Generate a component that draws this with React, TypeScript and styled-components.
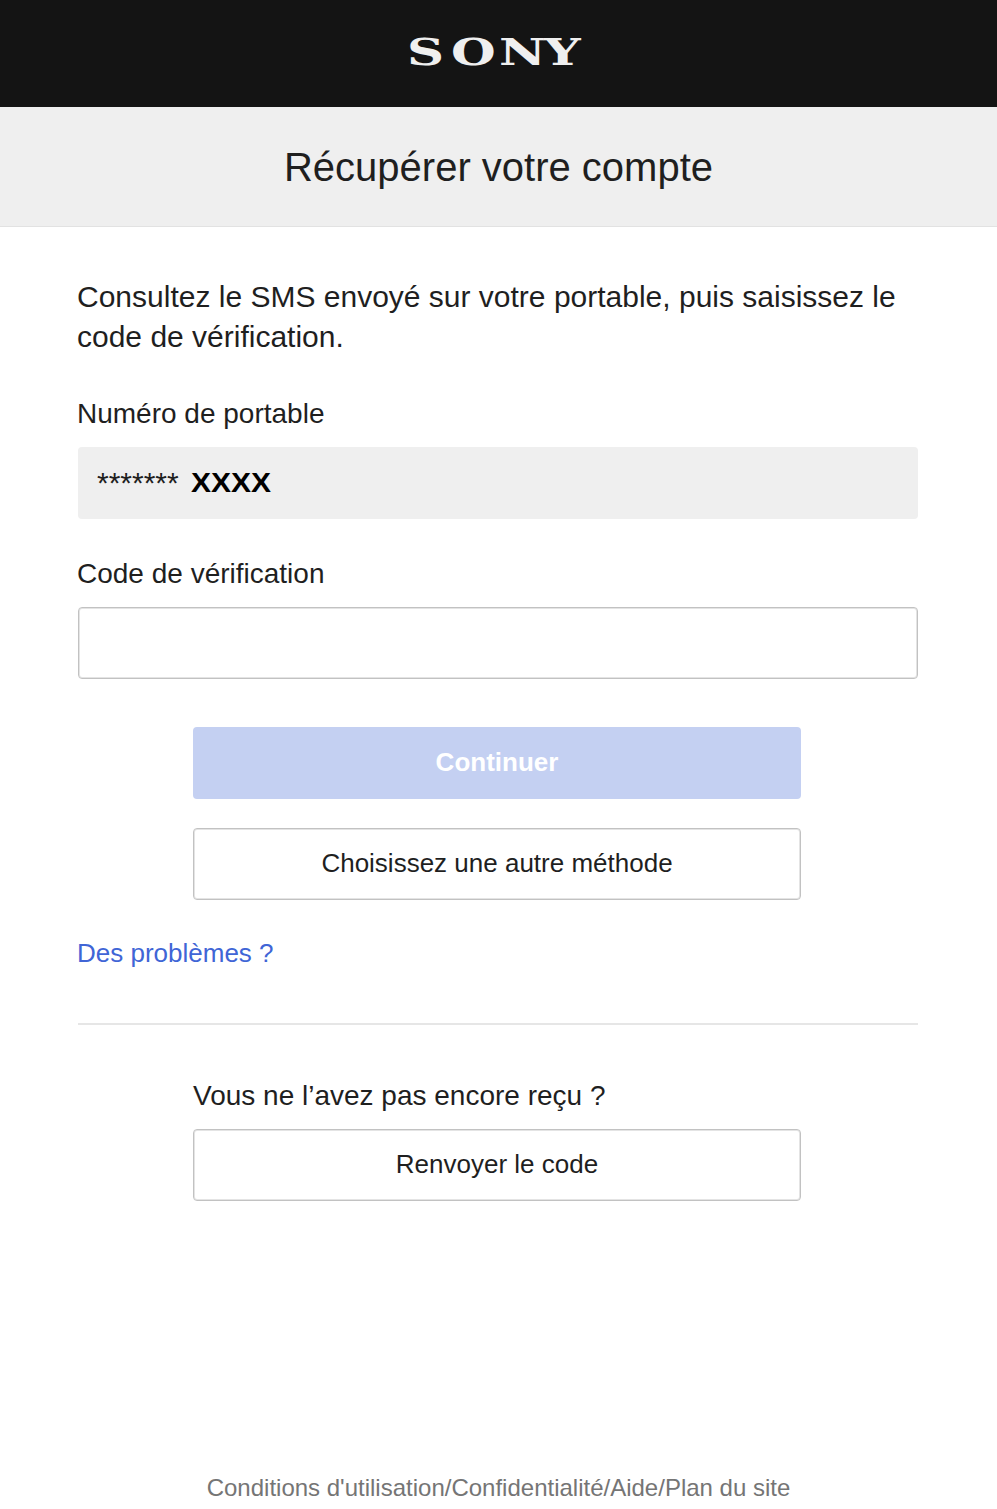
import React from "react";
import styled, { createGlobalStyle } from "styled-components";

const GlobalStyle = createGlobalStyle`
  * { box-sizing: border-box; }
  body {
    margin: 0;
    background: #fff;
    color: #1f1f1f;
    font-family: "Liberation Sans", Arial, sans-serif;
  }
`;

const Page = styled.div`
  display: flex;
  flex-direction: column;
  height: 1509px;
  overflow: hidden;
`;

const Header = styled.header`
  display: flex;
  justify-content: center;
  height: 107px;
  padding-top: 26px;
  background: #141414;
`;

const Logo = styled.svg`
  display: block;
  width: 200px;
  height: 50px;
  fill: #efefef;
  font-family: "DejaVu Serif", serif;
  font-weight: 700;
  font-size: 38px;
`;

const TitleBar = styled.div`
  height: 120px;
  background: #efefef;
  border-bottom: 1px solid #e2e2e2;
  text-align: center;
`;

const Title = styled.h1`
  margin: 0;
  padding: 37px 0 0;
  font-size: 40px;
  line-height: 46px;
  font-weight: 400;
`;

const Main = styled.main`
  display: flex;
  flex-direction: column;
  width: 840px;
  margin: 50px 0 0 78px;
`;

const Intro = styled.p`
  margin: 0 0 41px -1px;
  font-size: 30px;
  line-height: 40px;
`;

const Label = styled.label`
  margin: 0 0 17px -1px;
  font-size: 28px;
  line-height: 32px;
`;

const MaskedPhone = styled.div`
  display: flex;
  align-items: center;
  gap: 12px;
  height: 72px;
  margin-bottom: 39px;
  padding: 0 19px;
  border-radius: 4px;
  background: #efefef;
  font-size: 30px;
  line-height: 36px;
`;

const LastDigits = styled.b`
  color: #000;
  font-size: 28px;
  transform: scaleX(1.07);
  transform-origin: left;
`;

const CodeInput = styled.input`
  width: 100%;
  height: 72px;
  padding: 0 19px;
  border: 1px solid #c2c2c2;
  border-radius: 4px;
  box-shadow: inset 0 0 0 1px #e4e4e4;
  outline: none;
  font: inherit;
  font-size: 30px;
`;

const Actions = styled.div`
  display: flex;
  flex-direction: column;
  width: 608px;
  margin-left: 115px;
`;

const Button = styled.button<{ $primary?: boolean }>`
  height: 72px;
  padding: 0 0 1px;
  border: ${(p) => (p.$primary ? "0" : "1px solid #c2c2c2")};
  border-radius: 4px;
  box-shadow: ${(p) => (p.$primary ? "none" : "inset 0 0 0 1px #e4e4e4")};
  background: ${(p) => (p.$primary ? "#c4d0f2" : "#fff")};
  color: ${(p) => (p.$primary ? "#fff" : "#1f1f1f")};
  font: inherit;
  font-size: 26px;
  font-weight: ${(p) => (p.$primary ? 700 : 400)};
`;

const FormActions = styled(Actions)`
  gap: 29px;
  margin-top: 48px;
`;

const HelpLink = styled.a`
  align-self: flex-start;
  margin: 38px 0 0 -1px;
  color: #4065d6;
  font-size: 26px;
  line-height: 30px;
  text-decoration: none;
`;

const Divider = styled.hr`
  width: 100%;
  height: 2px;
  margin: 55px 0;
  border: 0;
  background: #e6e6e6;
`;

const Question = styled.p`
  margin: 0 0 17px;
  font-size: 28px;
  line-height: 32px;
`;

const Footer = styled.footer`
  display: flex;
  justify-content: center;
  margin-top: auto;
  padding-bottom: 7px;
  color: #757575;
  font-size: 24px;
  line-height: 28px;
`;

export default function App() {
  return (
    <Page>
      <GlobalStyle />
      <Header>
        <Logo viewBox="0 0 200 50" role="img" aria-label="SONY">
          <text transform="translate(0 39) scale(1.35 1)" x="6 38.5 74 107.5">
            SONY
          </text>
        </Logo>
      </Header>
      <TitleBar>
        <Title>Récupérer votre compte</Title>
      </TitleBar>
      <Main>
        <Intro>
          Consultez le SMS envoyé sur votre portable, puis saisissez le code de
          vérification.
        </Intro>
        <Label as="span">Numéro de portable</Label>
        <MaskedPhone>
          <span>*******</span>
          <LastDigits>XXXX</LastDigits>
        </MaskedPhone>
        <Label htmlFor="code">Code de vérification</Label>
        <CodeInput id="code" />
        <FormActions>
          <Button $primary>Continuer</Button>
          <Button>Choisissez une autre méthode</Button>
        </FormActions>
        <HelpLink>Des problèmes ?</HelpLink>
        <Divider />
        <Actions>
          <Question>Vous ne l’avez pas encore reçu ?</Question>
          <Button>Renvoyer le code</Button>
        </Actions>
      </Main>
      <Footer>Conditions d'utilisation/Confidentialité/Aide/Plan du site</Footer>
    </Page>
  );
}
